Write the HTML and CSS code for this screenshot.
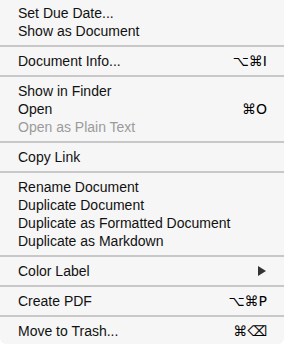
FILE: index.html
```html
<!DOCTYPE html>
<html lang="en">
	<head>
		<meta charset="UTF-8" />
		<title>Document Menu</title>
		<link rel="stylesheet" href="styles.css">
	</head>
	<body>
		<div class="menu">
			<div class="item"><span class="label">Set Due Date...</span></div>
			<div class="item"><span class="label">Show as Document</span></div>
			<div class="sep"></div>
			<div class="item"><span class="label">Document Info...</span><span class="key">⌥⌘I</span></div>
			<div class="sep"></div>
			<div class="item"><span class="label">Show in Finder</span></div>
			<div class="item"><span class="label">Open</span><span class="key">⌘O</span></div>
			<div class="item disabled"><span class="label">Open as Plain Text</span></div>
			<div class="sep"></div>
			<div class="item"><span class="label">Copy Link</span></div>
			<div class="sep"></div>
			<div class="item"><span class="label">Rename Document</span></div>
			<div class="item"><span class="label">Duplicate Document</span></div>
			<div class="item"><span class="label">Duplicate as Formatted Document</span></div>
			<div class="item"><span class="label">Duplicate as Markdown</span></div>
			<div class="sep"></div>
			<div class="item"><span class="label">Color Label</span><span class="arrow"></span></div>
			<div class="sep"></div>
			<div class="item"><span class="label">Create PDF</span><span class="key">⌥⌘P</span></div>
			<div class="sep"></div>
			<div class="item"><span class="label">Move to Trash...</span><span class="key">⌘⌫</span></div>
		</div>
	</body>
</html>
```

FILE: styles.css
```css
body {
	margin: 0;
	background: #ffffff;
	font-family: "Liberation Sans", Arial, "DejaVu Sans", sans-serif;
}

.menu {
	width: 284px;
	height: 344px;
	box-sizing: border-box;
	padding: 4px 0;
	background: #f6f6f6;
	border-radius: 0 0 6px 6px;
	display: flex;
	flex-direction: column;
}

.item {
	height: 18px;
	line-height: 18px;
	font-size: 14px;
	color: #111111;
	padding: 0 17px 0 18px;
	display: flex;
	justify-content: space-between;
	align-items: center;
}

.item.disabled {
	color: #9b9b9b;
}

.key {
	font-family: "DejaVu Sans", sans-serif;
	font-size: 14px;
	color: #000000;
}

.arrow {
	width: 0;
	height: 0;
	margin-right: 1px;
	border-top: 5px solid transparent;
	border-bottom: 5px solid transparent;
	border-left: 8px solid #333333;
}

.sep {
	height: 2px;
	margin: 5px 0;
	background: #c8c8c8;
}
```
